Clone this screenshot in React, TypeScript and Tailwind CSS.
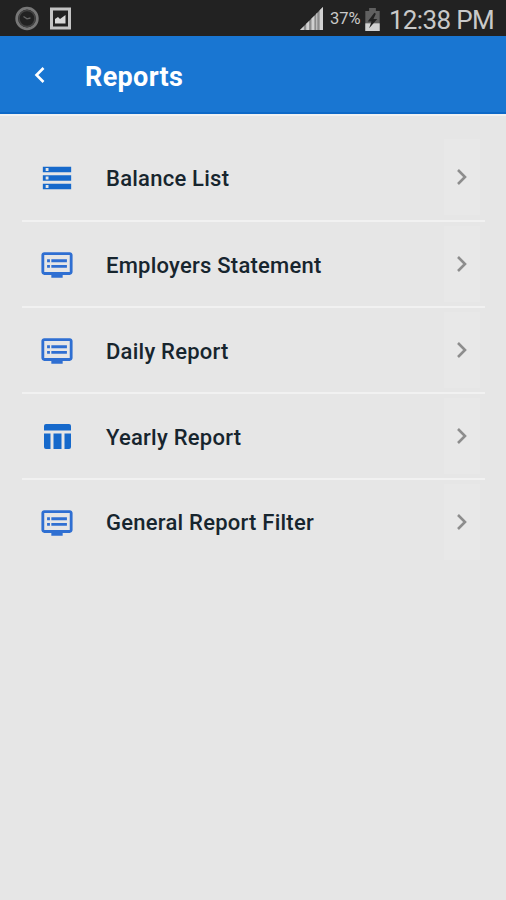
import type { ReactNode } from "react";

function StorageIcon() {
  return (
    <svg width="34" height="34" viewBox="0 0 24 24" fill="#1669cb">
      <path d="M2 20h20v-4H2v4zm2-3h2v2H4v-2zM2 4v4h20V4H2zm4 3H4V5h2v2zm-4 7h20v-4H2v4zm2-3h2v2H4v-2z" />
    </svg>
  );
}

function DvrIcon() {
  return (
    <svg width="34" height="34" viewBox="0 0 24 24" fill="#2f6fd2">
      <path d="M21 3H3c-1.100 0-2 .9-2 2v12c0 1.100.9 2 2 2h5v2h8v-2h5c1.100 0 1.990-.9 1.990-2L23 5c0-1.100-.9-2-2-2zm0 14H3V5h18v12zm-2-9H8v2h11V8zm0 4H8v2h11v-2zM7 8H5v2h2V8zm0 4H5v2h2v-2z" />
    </svg>
  );
}

function TableIcon() {
  return (
    <svg width="34" height="34" viewBox="0 0 34 34" fill="#1669cb">
      <path d="M4 10.500V6a2 2 0 0 1 2-2h23a2 2 0 0 1 2 2v4.500zM4 13.500h6.500V29H6a2 2 0 0 1-2-2zM13.500 13.500h8V29h-8zM24.500 13.500H31V27a2 2 0 0 1-2 2h-4.500z" />
    </svg>
  );
}

function StatusBar() {
  return (
    <div className="flex h-9 items-center bg-[#222222] pl-3.5 pr-3 text-[#c9c9c9]">
      <svg width="26" height="26" viewBox="0 0 26 26" fill="none">
        <circle cx="13" cy="13.500" r="10.300" stroke="#777" strokeWidth="2.800" />
        <circle cx="13" cy="13.500" r="8" stroke="#444" strokeWidth="1.500" />
        <path d="m9.500 11.500 3.500 2.300 3.500-.8" stroke="#666" strokeWidth="1.300" />
      </svg>
      <svg className="ml-[10px]" width="22" height="24" viewBox="0 0 22 24" fill="none">
        <rect x="1.500" y="3" width="18" height="19" stroke="#c4c4c4" strokeWidth="3" />
        <path d="M5 17.500V13l3-2 2 2 5.500-4v8.500z" fill="#d8d8d8" />
      </svg>
      <svg className="ml-auto mt-px" width="23" height="23" viewBox="0 0 24 24">
        <path d="M0 24 24 0v24z" fill="#8c8c8c" />
        <path d="M0 24l4-4v4zM6.500 24v-6.500l3-3V24zM12 24V12l3-3v15zM17 24V7l1-1v18zM20.500 24V3.500L24 0v24z" fill="#d0d0d0" />
      </svg>
      <span className="ml-[7px] mt-[3px] w-[33px] whitespace-nowrap font-[Roboto] text-[16.500px]">37%</span>
      <svg className="ml-[2px] mt-0.5" width="15" height="23" viewBox="0 0 15 24">
        <path d="M4 0h7v3h4v21H0V3h4z" fill="#606060" />
        <path d="M0 16h15v8H0z" fill="#d2d2d2" />
        <path d="m9.500 5-7 9h4L4 21l8.500-9.500h-4L11 6z" fill="#222" />
      </svg>
      <span className="ml-[9px] mt-1 whitespace-nowrap font-[Roboto] text-[26px] leading-none tracking-[-0.65px]">12:38 PM</span>
    </div>
  );
}

function ReportRow({ icon, label }: { icon: ReactNode; label: string }) {
  return (
    <div className="flex h-[86px] items-center border-b-2 border-[#f1f1f1] pl-[18px] pr-[5px] pt-0.5 first:pt-0 last:border-transparent last:pt-px">
      {icon}
      <span className="ml-[32px] whitespace-nowrap font-[Roboto] text-[22px] font-medium tracking-[0.24px] text-[#17252e]">
        {label}
      </span>
      <div className="-mt-0.5 ml-auto flex h-[76px] w-9 items-center justify-center bg-[#e8e8e8]">
        <svg width="12" height="18" viewBox="0 0 12 18" fill="none" stroke="#8d8d8d" strokeWidth="2.600">
          <path d="m2 2 7 7-7 7" />
        </svg>
      </div>
    </div>
  );
}

const reports = [
  { label: "Balance List", icon: <StorageIcon /> },
  { label: "Employers Statement", icon: <DvrIcon /> },
  { label: "Daily Report", icon: <DvrIcon /> },
  { label: "Yearly Report", icon: <TableIcon /> },
  { label: "General Report Filter", icon: <DvrIcon /> },
];

export default function App() {
  return (
    <div className="flex h-[900px] w-[506px] flex-col overflow-hidden bg-[#e6e6e6]">
      <StatusBar />
      <header className="flex h-[78px] items-center border-b-2 border-[#0d69c8] bg-[#1976d2] pl-[33px] pt-0.5 text-white">
        <svg width="12" height="18" viewBox="0 0 12 18" fill="none" stroke="currentColor" strokeWidth="2.600">
          <path d="M10.500 2 3.500 9l7 7" />
        </svg>
        <h1 className="ml-[40px] mt-1 whitespace-nowrap font-[Roboto] text-[27px] font-bold tracking-[0.35px]">Reports</h1>
      </header>
      <main className="flex-1 border-t-2 border-[#f1f1f1] pl-[22px] pr-[21px] pt-5">
        {reports.map((report) => (
          <ReportRow key={report.label} icon={report.icon} label={report.label} />
        ))}
      </main>
    </div>
  );
}
